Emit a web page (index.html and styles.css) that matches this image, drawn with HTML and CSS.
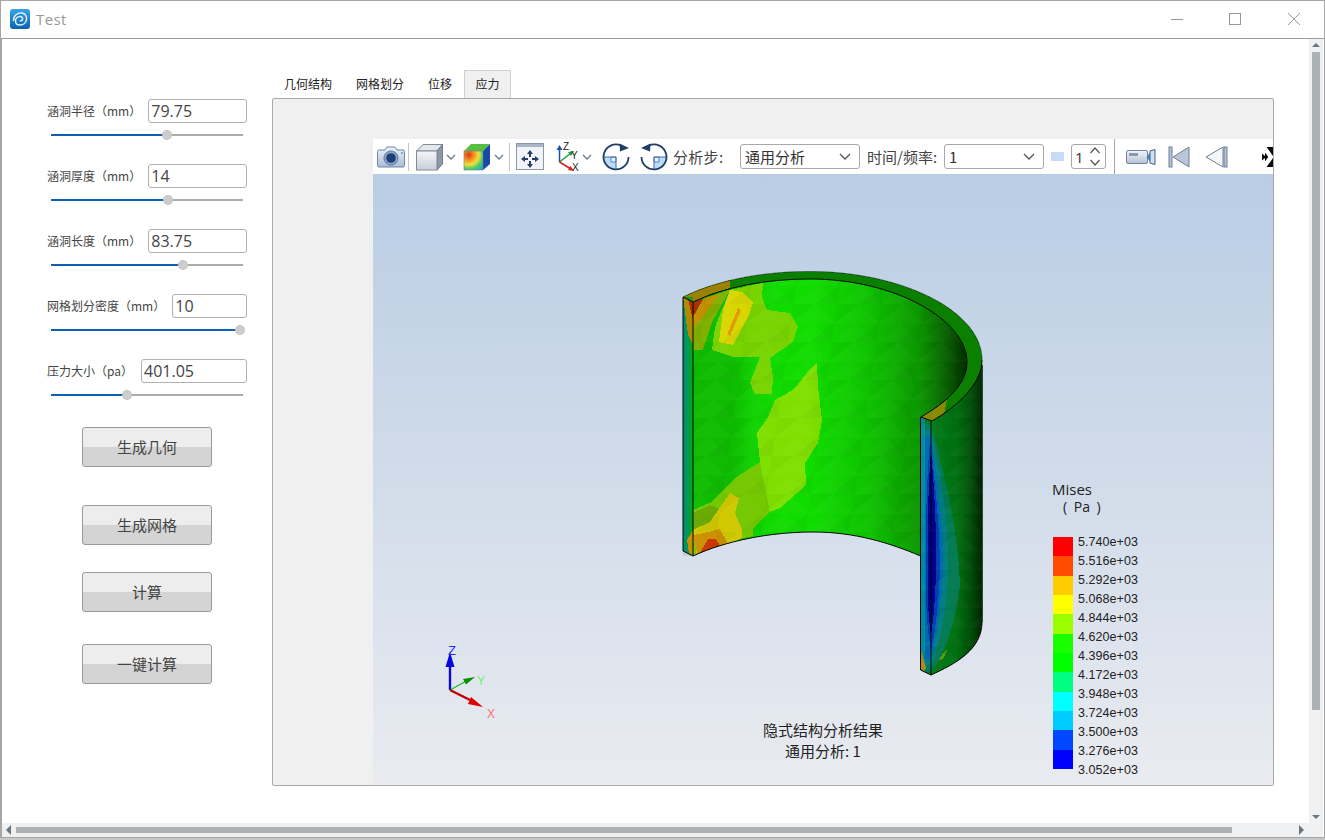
FILE: index.html
```html
<!DOCTYPE html>
<html lang="zh">
<head>
<meta charset="utf-8">
<title>Test</title>
<link rel="stylesheet" href="styles.css">
</head>
<body>
<div class="window">
  <header class="titlebar">
    <svg class="logo" viewBox="0 0 20 20">
      <defs><linearGradient id="lg" x1="0" y1="0" x2="0" y2="1"><stop offset="0" stop-color="#35a5e8"/><stop offset="1" stop-color="#0a62b0"/></linearGradient></defs>
      <rect width="20" height="20" rx="3" fill="url(#lg)"/>
      <path d="M3.500 11.500C3.500 6 8 3.500 12 4c3.500 .5 5 3.500 4.500 6.500-.5 3-3 5.500-6.500 5.500-2.500 0-4.500-1.500-4.500-4 0-2.500 2-4.500 4.500-4.500 2 0 3 1.500 2.500 3-.3 1-1.200 1.500-2.200 1.300" fill="none" stroke="#dff0fb" stroke-width="1.500" stroke-linecap="round"/>
    </svg>
    <span class="title">Test</span>
    <div class="winctl">
      <svg class="wc" viewBox="0 0 12 12"><path d="M0 6.500H12" stroke="#999" fill="none"/></svg>
      <svg class="wc wc-max" viewBox="0 0 12 12"><rect x=".5" y=".5" width="11" height="11" fill="none" stroke="#999"/></svg>
      <svg class="wc" viewBox="0 0 12 12"><path d="M0 0L12 12M12 0L0 12" stroke="#999" fill="none"/></svg>
    </div>
  </header>
  <div class="client">
    <div class="client-main">
      <div class="content">
        <aside class="sidebar">
          <div class="field"><div class="row"><label class="lbl">涵洞半径（mm）</label><input class="num" value="79.75"></div>
            <div class="slider"><div class="fill" style="width:116px"></div><div class="knob" style="left:116px"></div></div></div>
          <div class="field"><div class="row"><label class="lbl">涵洞厚度（mm）</label><input class="num" value="14"></div>
            <div class="slider"><div class="fill" style="width:117px"></div><div class="knob" style="left:117px"></div></div></div>
          <div class="field"><div class="row"><label class="lbl">涵洞长度（mm）</label><input class="num" value="83.75"></div>
            <div class="slider"><div class="fill" style="width:132px"></div><div class="knob" style="left:132px"></div></div></div>
          <div class="field"><div class="row"><label class="lbl">网格划分密度（mm）</label><input class="num" value="10"></div>
            <div class="slider"><div class="fill" style="width:189px"></div><div class="knob" style="left:189px"></div></div></div>
          <div class="field"><div class="row"><label class="lbl lbl-pa">压力大小（pa）</label><input class="num" value="401.05"></div>
            <div class="slider"><div class="fill" style="width:76px"></div><div class="knob" style="left:76px"></div></div></div>
          <button class="btn b1">生成几何</button>
          <button class="btn b2">生成网格</button>
          <button class="btn b3">计算</button>
          <button class="btn b4">一键计算</button>
        </aside>
        <section class="tabs-area">
          <nav class="tabs">
            <span class="tab">几何结构</span><span class="tab">网格划分</span><span class="tab">位移</span><span class="tab active">应力</span>
          </nav>
          <div class="pane">
            <div class="viewer">
              <div class="toolbar">
                <svg class="ic i-cam" viewBox="0 0 30 26">
                  <defs><linearGradient id="cam" x1="0" y1="0" x2="0" y2="1"><stop offset="0" stop-color="#eef3f9"/><stop offset="1" stop-color="#a9bdd6"/></linearGradient></defs>
                  <path d="M3 6h6l2-3h8l2 3h6a1.500 1.500 0 0 1 1.500 1.500v14a1.500 1.500 0 0 1-1.500 1.500H3a1.500 1.500 0 0 1-1.500-1.500v-14A1.500 1.500 0 0 1 3 6z" fill="url(#cam)" stroke="#6f85a3"/>
                  <circle cx="15" cy="14" r="7" fill="#8ea6c4" stroke="#5f7898"/>
                  <circle cx="15" cy="14" r="4.800" fill="#1d3f7c"/>
                  <circle cx="26" cy="9" r="1" fill="#7b90ad"/>
                </svg>
                <i class="tsep s1"></i>
                <svg class="ic i-cube" viewBox="0 0 29 28">
                  <defs><linearGradient id="cb" x1="0" y1="0" x2="0" y2="1"><stop offset="0" stop-color="#f5f6f8"/><stop offset="1" stop-color="#c8ced8"/></linearGradient></defs>
                  <path d="M1.500 8L8 1.500H27.500L22 8z" fill="#e4e7ec" stroke="#808a99"/>
                  <path d="M22 8L27.500 1.500V21L22 27z" fill="#8d98a8" stroke="#707a8a"/>
                  <rect x="1.500" y="8" width="20.500" height="19" fill="url(#cb)" stroke="#808a99"/>
                </svg>
                <svg class="chev c1" viewBox="0 0 10 6"><path d="M1 1l4 4 4-4" fill="none" stroke="#6a7a8a" stroke-width="1.300"/></svg>
                <svg class="ic i-ccube" viewBox="0 0 28 28">
                  <defs><radialGradient id="cc" cx=".25" cy=".2" r="1.050"><stop offset="0" stop-color="#e83020"/><stop offset=".3" stop-color="#f0a020"/><stop offset=".5" stop-color="#f0e040"/><stop offset=".7" stop-color="#50d060"/><stop offset="1" stop-color="#20a0e0"/></radialGradient></defs>
                  <path d="M1 8L8 1H27L20 8z" fill="#58c040"/>
                  <path d="M20 8L27 1V21L20 27z" fill="#1848a8"/>
                  <rect x="1" y="8" width="19" height="19" fill="url(#cc)" stroke="#707a8a" stroke-width=".6"/>
                </svg>
                <svg class="chev c2" viewBox="0 0 10 6"><path d="M1 1l4 4 4-4" fill="none" stroke="#6a7a8a" stroke-width="1.300"/></svg>
                <i class="tsep s2"></i>
                <svg class="ic i-fit" viewBox="0 0 30 30">
                  <rect x="1.500" y="1.500" width="27" height="26" fill="#f2f4f7" stroke="#8a98a8"/>
                  <rect x="2" y="2" width="26" height="3" fill="#a9b6c6"/>
                  <path d="M15 8l-3 4h2v3h2v-3h2zM15 26l-3-4h2v-3h2v3h2zM6 17l4-3v2h3v2h-3v2zM24 17l-4-3v2h-3v2h3v2z" fill="#233f63"/>
                </svg>
                <svg class="ic i-axes" viewBox="0 0 28 30">
                  <path d="M5.500 20V6" stroke="#1c4fb0" stroke-width="1.500"/><path d="M5.500 3l-3 5h6z" fill="#1c4fb0"/>
                  <path d="M5.500 20L17 11" stroke="#1a9a3c" stroke-width="1.500"/><path d="M20 9l-6 1 3 4z" fill="#1a9a3c"/>
                  <path d="M5.500 20L17 27" stroke="#d82020" stroke-width="1.500"/><path d="M20 29l-6-1 2.500-4z" fill="#d82020"/>
                  <text x="9" y="8" class="axl">Z</text><text x="17" y="17" class="axl">Y</text><text x="18" y="29" class="axl">X</text>
                </svg>
                <svg class="chev c3" viewBox="0 0 10 6"><path d="M1 1l4 4 4-4" fill="none" stroke="#6a7a8a" stroke-width="1.300"/></svg>
                <svg class="ic i-rot" viewBox="0 0 30 30">
                  <path d="M15 15V27.500A12.500 12.500 0 0 1 2.500 15z" fill="#bcdcf5"/>
                  <path d="M10 15h5v5h-5z" fill="#e4f2fc" stroke="#3f6fa8" stroke-width=".8"/>
                  <path d="M15 15V28M15 15H2" stroke="#3f6fa8" fill="none"/>
                  <path d="M20 3.500A12.500 12.500 0 1 0 27.500 15" fill="none" stroke="#1f3f66" stroke-width="1.800"/>
                  <path d="M28 6l-9 3.500-.5-8z" fill="#1f3f66"/>
                </svg>
                <svg class="ic i-rot2" viewBox="0 0 30 30">
                  <path d="M15 15V27.500A12.500 12.500 0 0 0 27.500 15z" fill="#bcdcf5"/>
                  <path d="M15 15h5v5h-5z" fill="#e4f2fc" stroke="#3f6fa8" stroke-width=".8"/>
                  <path d="M15 15V28M15 15H28" stroke="#3f6fa8" fill="none"/>
                  <path d="M10 3.500A12.500 12.500 0 1 1 2.500 15" fill="none" stroke="#1f3f66" stroke-width="1.800"/>
                  <path d="M2 6l9 3.500 .5-8z" fill="#1f3f66"/>
                </svg>
                <span class="tlabel l1">分析步:</span>
                <div class="combo c-a"><span>通用分析</span><svg class="cchev" viewBox="0 0 12 7"><path d="M1 1l5 5 5-5" fill="none" stroke="#555" stroke-width="1.300"/></svg></div>
                <span class="tlabel l2">时间/频率:</span>
                <div class="combo c-b"><span>1</span><svg class="cchev" viewBox="0 0 12 7"><path d="M1 1l5 5 5-5" fill="none" stroke="#555" stroke-width="1.300"/></svg></div>
                <i class="pill"></i>
                <div class="spin"><span>1</span><svg class="spinarrows" viewBox="0 0 12 21"><path d="M1.500 7l4.500-5 4.500 5M1.500 14l4.500 5 4.500-5" fill="none" stroke="#555" stroke-width="1.200"/></svg></div>
                <i class="tsep s3"></i>
                <svg class="ic i-rec" viewBox="0 0 30 18">
                  <defs><linearGradient id="rc" x1="0" y1="0" x2="0" y2="1"><stop offset="0" stop-color="#f4f6fa"/><stop offset="1" stop-color="#b4c2d6"/></linearGradient></defs>
                  <rect x=".5" y="2.500" width="21" height="13" rx="1.500" fill="url(#rc)" stroke="#71849c"/>
                  <rect x="3" y="5" width="9" height="3" fill="#8a99ac"/>
                  <path d="M21 9l3-4v8z" fill="#20a0d8" stroke="#3f6288" stroke-width=".6"/>
                  <path d="M24 3l5-1.500v15L24 15z" fill="#d4deec" stroke="#3f6288"/>
                </svg>
                <svg class="ic i-first" viewBox="0 0 22 22">
                  <rect x="1" y="1" width="3" height="20" fill="#b7c4d6" stroke="#6d7e96"/>
                  <path d="M5 11L21 1V21z" fill="#b8c6d8" stroke="#6d7e96"/>
                </svg>
                <svg class="ic i-prev" viewBox="0 0 24 22">
                  <path d="M1 11L18 1V21z" fill="#f4f7fa" stroke="#6d7e96"/>
                  <rect x="19" y="1" width="3" height="20" fill="#b7c4d6" stroke="#6d7e96"/>
                </svg>
                <svg class="ic i-next" viewBox="0 0 14 22">
                  <rect x="3" y="1" width="11" height="20" fill="#0a0a0a"/>
                  <path d="M1 0L9 11 1 22" fill="none" stroke="#fff" stroke-width="4.500"/>
                  <path d="M0 7.500L4 11 0 14.500z" fill="#0a0a0a"/>
                </svg>
              </div>
              <div class="viewport">
                <svg class="scene" viewBox="373 174 900 611" shape-rendering="crispEdges">
                  <defs>
                    <clipPath id="wallclip"><path d="M693 302C725 287 765 279 810 279C895 279 967 320 967 362C967 385 945 403 921 417V556C890 543 855 532 813 532C770 532 725 541 693 556Z"/></clipPath>
                    <clipPath id="frontclip"><path d="M921 417L932 421C955 408 982 385 982 360V622C982 650 955 664 931 675L921 670Z"/></clipPath>
                    <linearGradient id="shadeL" gradientUnits="userSpaceOnUse" x1="693" y1="0" x2="780" y2="0">
                      <stop offset="0" stop-color="#000" stop-opacity=".15"/><stop offset=".44" stop-color="#000" stop-opacity=".15"/><stop offset=".7" stop-color="#000" stop-opacity=".05"/><stop offset="1" stop-color="#000" stop-opacity="0"/>
                    </linearGradient>
                    <linearGradient id="shadeR" gradientUnits="userSpaceOnUse" x1="810" y1="0" x2="967" y2="0">
                      <stop offset="0" stop-color="#000" stop-opacity="0"/><stop offset=".38" stop-color="#000" stop-opacity=".12"/><stop offset=".7" stop-color="#000" stop-opacity=".32"/><stop offset=".9" stop-color="#000" stop-opacity=".62"/><stop offset="1" stop-color="#000" stop-opacity=".8"/>
                    </linearGradient>
                    <linearGradient id="lface" gradientUnits="userSpaceOnUse" x1="683" y1="0" x2="693" y2="0">
                      <stop offset="0" stop-color="#008a80"/><stop offset=".5" stop-color="#009a50"/><stop offset="1" stop-color="#08a808"/>
                    </linearGradient>
                    <linearGradient id="outer" gradientUnits="userSpaceOnUse" x1="931" y1="0" x2="982" y2="0">
                      <stop offset="0" stop-color="#007a18"/><stop offset=".5" stop-color="#007010"/><stop offset=".78" stop-color="#004e08"/><stop offset="1" stop-color="#002400"/>
                    </linearGradient>
                    <pattern id="mesh" patternUnits="userSpaceOnUse" width="44" height="38" patternTransform="skewX(-8)">
                      <polygon points="0,19 22,0 44,19" fill="#fff" fill-opacity=".022"/>
                      <polygon points="22,19 44,38 0,38" fill="#fff" fill-opacity=".022"/>
                      <polygon points="0,0 22,0 0,19" fill="#000" fill-opacity=".022"/>
                      <polygon points="44,19 22,38 44,38" fill="#000" fill-opacity=".035"/>
                    </pattern>
                  </defs>

                  <path d="M693 302C725 287 765 279 810 279C895 279 967 320 967 362C967 385 945 403 921 417V556C890 543 855 532 813 532C770 532 725 541 693 556Z" fill="#10dc00"/>
                  <g clip-path="url(#wallclip)">
                    <rect x="690" y="270" width="100" height="300" fill="url(#shadeL)"/>
                    <polygon points="730,290 763,283 762,297 767,310 790,313 798,327 793,342 770,358 773,377 772,394 755,394 750,383 760,357 733,357 712,350 715,327" fill="#78d400"/>
                    <polygon points="817,363 818,387 822,420 818,443 805,463 806,485 780,508 770,512 753,528 753,536 730,541 697,554 693,556 693,510 712,502 735,478 760,462 757,433 768,417 775,400 793,390 812,367" fill="#7edf00"/>
                    <polygon points="735,478 760,462 770,512 753,528 753,536 730,541 697,554 693,556 693,510 712,502" fill="#74c800"/>
                    <polygon points="693,513 710,505 722,510 715,522 693,532" fill="#68a800"/>
                    <polygon points="730,290 742,292 753,302 750,313 733,345 719,342 723,310" fill="#d8d600"/>
                    <polygon points="738,308 741,310 730,336 727,335" fill="#e09a00"/>
                    <polygon points="693,302 730,290 713,320 703,350 693,350" fill="#80b000"/>
                    <polygon points="693,302 720,293 703,317 693,327" fill="#c09000"/>
                    <polygon points="693,302 703,299 696,312 693,316" fill="#a83000"/>
                    <polygon points="730,493 739,498 735,513 742,530 742,538 727,545 697,556 693,530 710,522" fill="#d0c800"/>
                    <polygon points="720,529 728,544 698,556 693,535 709,532" fill="#cc9000"/>
                    <polygon points="708,539 716,539 720,546 698,556" fill="#c83800"/>
                    <rect x="810" y="270" width="170" height="300" fill="url(#shadeR)"/>
                    <rect x="690" y="270" width="290" height="300" fill="url(#mesh)"/>
                  </g>

                  <path d="M683 297C720 279 765 271.500 810 271.500C900 271.500 982 310 982 360C982 385 955 408 932 421L921 417C945 403 967 385 967 362C967 320 895 279 810 279C765 279 725 287 693 302Z" fill="#0a7f00"/>
                  <polygon points="683,297 700,289 730,280 730,288 710,294 693,302" fill="#9c8000"/>
                  <polygon points="921,417 936,408 947,400 944,414 932,421" fill="#8a8a00"/>

                  <rect x="683" y="297" width="10" height="259" fill="url(#lface)"/>
                  <polygon points="683,551 693,556 683,556" fill="#c8ced9"/>
                  <polygon points="683,297 693,302 693,345 688,335" fill="#b08a00"/>
                  <polygon points="688,299 693,302 693,320" fill="#b03000"/>
                  <polygon points="687,540 693,530 693,556 689,553" fill="#c89000"/>

                  <path d="M921 417L932 421C955 408 982 385 982 360V622C982 650 955 664 931 675L921 670Z" fill="url(#outer)"/>
                  <g clip-path="url(#frontclip)">
                    <path d="M931 424Q958 520 960 585Q952 645 931 672L915 672V424z" fill="#007a50"/>
                    <path d="M931 430Q950 510 948 578Q944 635 931 668L915 668V430z" fill="#007c80"/>
                    <path d="M931 436Q944 520 943 572Q940 625 931 660L917 660V436z" fill="#0068b0"/>
                    <path d="M930 440Q940 520 940 570Q938 620 931 650Q925 620 926 570Q925 500 930 440z" fill="#0040b0"/>
                    <path d="M931 450Q937 520 936 570Q935 610 931 635Q927 610 928 570Q927 500 931 450z" fill="#000090"/>
                    <rect x="921" y="417" width="4" height="260" fill="#008aa0"/>
                    <polygon points="921,650 926,668 923,671 921,668" fill="#b08a10"/>
                    <polygon points="942,655 948,648 943,659 939,660" fill="#5a9a10"/>
                    <rect x="920" y="360" width="62" height="320" fill="url(#mesh)"/>
                  </g>

                  <g fill="none" stroke="#050505" stroke-width="1" shape-rendering="geometricPrecision">
                    <path d="M693 302C725 287 765 279 810 279C895 279 967 320 967 362C967 385 945 403 921 417L932 421C955 408 982 385 982 360"/>
                    <path d="M683 297C720 279 765 271.500 810 271.500C900 271.500 982 310 982 360" stroke-width=".7" stroke="#143a14"/>
                    <path d="M683 297L693 302V556L683 551ZM693 556C725 541 770 532 813 532C855 532 890 543 920.500 556M920.500 417V670L931 675V421M931 675C955 664 982 650 982 622"/>
                  </g>
                  <path d="M982 365V622" fill="none" stroke="#062006" stroke-width=".8"/>

                  <g shape-rendering="geometricPrecision">
                    <path d="M450 690V662" stroke="#0a0ad8" stroke-width="2.400"/>
                    <path d="M450 652l-4.500 15h9z" fill="#0808e0"/>
                    <path d="M450 690L470 679" stroke="#10c030" stroke-width="1.400"/>
                    <path d="M475 677l-12 2 3 5.500z" fill="#0a9000"/>
                    <path d="M450 690L470 700" stroke="#c00000" stroke-width="2.400"/>
                    <path d="M483 707l-12-10-3 7z" fill="#e00000"/>
                    <text x="448" y="655" class="tz">Z</text>
                    <text x="477" y="685" class="ty">Y</text>
                    <text x="487" y="718" class="tx">X</text>
                  </g>
                </svg>

                <div class="legend">
                  <div class="l-title">Mises</div>
                  <div class="l-unit">( Pa )</div>
                  <div class="l-body">
                    <div class="bars">
                      <i class="bar c01"></i><i class="bar c02"></i><i class="bar c03"></i><i class="bar c04"></i><i class="bar c05"></i><i class="bar c06"></i><i class="bar c07"></i><i class="bar c08"></i><i class="bar c09"></i><i class="bar c10"></i><i class="bar c11"></i><i class="bar c12"></i>
                    </div>
                    <div class="vals">
                      <span>5.740e+03</span><span>5.516e+03</span><span>5.292e+03</span><span>5.068e+03</span><span>4.844e+03</span><span>4.620e+03</span><span>4.396e+03</span><span>4.172e+03</span><span>3.948e+03</span><span>3.724e+03</span><span>3.500e+03</span><span>3.276e+03</span><span>3.052e+03</span>
                    </div>
                  </div>
                </div>
                <div class="caption"><div>隐式结构分析结果</div><div>通用分析: 1</div></div>
              </div>
            </div>
          </div>
        </section>
      </div>
      <div class="hscroll">
        <svg class="sarrow" viewBox="0 0 5 10"><path d="M5 0V10L0 5z" fill="#6a7680"/></svg>
        <div class="hthumb"></div>
        <svg class="sarrow-r" viewBox="0 0 5 10"><path d="M0 0V10L5 5z" fill="#6a7680"/></svg>
      </div>
    </div>
    <div class="vscroll">
      <svg class="varrow" viewBox="0 0 10 5"><path d="M0 5H10L5 0z" fill="#6a7680"/></svg>
      <div class="vthumb"></div>
      <svg class="varrow" viewBox="0 0 10 5"><path d="M0 0H10L5 5z" fill="#6a7680"/></svg>
    </div>
  </div>
</div>
</body>
</html>
```

FILE: styles.css
```css
* { box-sizing: border-box; }
html, body { margin: 0; padding: 0; height: 100%; overflow: hidden; background: #c8c8c8; }
body { font-family: "Noto Sans CJK SC", "Liberation Sans", sans-serif; color: #333; }

.window { width: 1325px; height: 838px; background: #fff; border: 1px solid #a6a6a6; display: flex; flex-direction: column; }

.titlebar { height: 38px; flex: none; display: flex; align-items: center; padding: 0 0 2px 9px; border-bottom: 1px solid #9c9c9c; }
.logo { width: 20px; height: 20px; flex: none; }
.title { margin-left: 6px; font: 15px "Open Sans", "Liberation Sans", sans-serif; color: #999; letter-spacing: .4px; }
.winctl { margin-left: auto; display: flex; align-items: center; padding-right: 24px; gap: 46px; }
.wc { width: 12px; height: 12px; display: block; }
.wc-max { margin-right: 1px; }

.client { flex: 1; min-height: 0; display: flex; border-left: 1px solid #a6a6a6; }
.client-main { flex: 1; min-width: 0; display: flex; flex-direction: column; }
.content { flex: 1; min-height: 0; display: flex; }

.sidebar { width: 270px; flex: none; padding: 60px 25px 0 44px; display: flex; flex-direction: column; align-items: stretch; }
.field { margin-bottom: 24px; }
.row { display: flex; align-items: center; height: 24px; }
.lbl { flex: none; font-size: 12px; line-height: 24px; margin: 0 7px 0 1px; color: #444; white-space: nowrap; }
.lbl-pa { margin-right: 8px; }
.num { flex: 1; min-width: 0; height: 24px; padding: 0 2px; border: 1px solid #b0b0b0; border-radius: 3px; font: 16px "Open Sans", "Liberation Sans", sans-serif; color: #444; outline: none; background: #fff; }

.slider { position: relative; height: 2px; margin: 11px 4px 4px 5px; background: #acacac; }
.fill { height: 100%; background: #0a62b5; }
.knob { position: absolute; top: -4px; width: 10px; height: 10px; margin-left: -5px; border-radius: 50%; background: #cdcdcd; border: 1px dotted #bbb; }

.btn { display: block; width: 130px; height: 40px; margin-left: 36px; flex: none; padding: 0 0 2px; border: 1px solid #9a9a9a; border-radius: 3px; background: linear-gradient(#ededed 0, #ededed 50%, #d4d4d4 50%, #d4d4d4 100%); font: 15px "Noto Sans CJK SC", sans-serif; color: #444; }
.b1 { margin-top: 3px; }
.b2 { margin-top: 38px; }
.b3 { margin-top: 27px; }
.b4 { margin-top: 32px; }

.tabs-area { flex: none; width: 1002px; padding-top: 31px; display: flex; flex-direction: column; height: 747px; }
.tabs { height: 28px; flex: none; display: flex; padding-left: 0; }
.tab { padding: 0 12px; font-size: 12px; line-height: 27px; color: #222; }
.active { background: #f0f0f0; border: 1px solid #d0d0d0; border-bottom: 0; padding: 0 10.500px; line-height: 26px; }
.pane { flex: 1; min-height: 0; background: #f0f0f0; border: 1px solid #a8a8a8; border-radius: 2px; padding: 40px 0 0 100px; }
.viewer { height: 100%; display: flex; flex-direction: column; overflow: hidden; }

.toolbar { height: 35px; flex: none; background: #fff; display: flex; align-items: center; overflow: hidden; }
.ic { flex: none; display: block; }
.i-cam { width: 30px; height: 26px; margin-left: 3px; }
.tsep { flex: none; display: block; width: 1px; background: #c6c6c6; height: 28px; }
.s1 { margin-left: 2px; }
.i-cube { width: 29px; height: 28px; margin-left: 6px; }
.chev { flex: none; width: 10px; height: 6px; display: block; }
.c1 { margin-left: 2px; }
.i-ccube { width: 28px; height: 28px; margin-left: 7px; }
.c2 { margin-left: 3px; }
.s2 { margin-left: 5px; }
.i-fit { width: 30px; height: 30px; margin-left: 5px; }
.i-axes { width: 28px; height: 30px; margin-left: 9px; }
.axl { font: 10px "Liberation Sans", sans-serif; fill: #222; }
.c3 { margin-left: 0; }
.i-rot { width: 30px; height: 30px; margin-left: 9px; }
.i-rot2 { width: 30px; height: 30px; margin-left: 8px; }
.tlabel { flex: none; font-size: 15px; color: #444; white-space: nowrap; line-height: 20px; }
.l1 { margin-left: 4px; width: 67px; letter-spacing: .3px; }
.l2 { margin-left: 7px; width: 77px; }
.combo { flex: none; height: 25px; display: flex; align-items: center; justify-content: space-between; padding: 0 8px 0 4px; border: 1px solid #a8a8a8; border-radius: 3px; background: #fff; font-size: 15px; color: #333; }
.c-a { width: 120px; }
.c-b { width: 100px; }
.cchev { width: 12px; height: 7px; display: block; flex: none; }
.pill { flex: none; display: block; width: 13px; height: 9px; margin-left: 7px; background: #c6dcf6; border-radius: 1px; }
.spin { flex: none; width: 35px; height: 25px; margin-left: 7px; display: flex; align-items: center; justify-content: space-between; padding: 0 4px 0 3px; border: 1px solid #a8a8a8; border-radius: 3px; font: 15px "Open Sans", sans-serif; color: #333; }
.spinarrows { width: 12px; height: 21px; display: block; }
.s3 { margin-left: 8px; height: 35px; background: #a8a8a8; }
.i-rec { width: 30px; height: 18px; margin-left: 11px; }
.i-first { width: 22px; height: 22px; margin-left: 12px; }
.i-prev { width: 24px; height: 22px; margin-left: 15px; }
.i-next { width: 14px; height: 22px; margin-left: 33px; }

.viewport { flex: 1; min-height: 0; position: relative; overflow: hidden; background: linear-gradient(#b9cde4, #e9ebf0); }
.scene { position: absolute; inset: 0; width: 900px; height: 611px; display: block; }
.tz { font: 13px "Liberation Sans", sans-serif; fill: #2a2aff; }
.ty { font: 12px "Liberation Sans", sans-serif; fill: #70f070; }
.tx { font: 12px "Liberation Sans", sans-serif; fill: #ff7070; }

.legend { position: absolute; left: 679px; top: 306px; color: #111; }
.l-title { font: 15px/18px "Open Sans", "Liberation Sans", sans-serif; color: #222; }
.l-unit { font: 14px/18px "Open Sans", sans-serif; color: #222; margin-left: 11px; word-spacing: 3px; }
.l-body { display: flex; margin-top: 21px; margin-left: 1px; }
.bars { width: 20px; display: flex; flex-direction: column; flex: none; }
.bar { display: block; height: 19.330px; flex: none; }
.c01 { background: #ff0000; } .c02 { background: #ff4c00; } .c03 { background: #ffcc00; } .c04 { background: #ffff00; }
.c05 { background: #99ff00; } .c06 { background: #19ff00; } .c07 { background: #00ff00; } .c08 { background: #00ff80; }
.c09 { background: #00ffff; } .c10 { background: #00ccff; } .c11 { background: #0048ff; } .c12 { background: #0000ff; }
.vals { margin-left: 5px; display: flex; flex-direction: column; font: 12.500px/19px "Liberation Sans", sans-serif; color: #222; margin-top: -4px; letter-spacing: .05px; }
.caption { position: absolute; left: 350px; width: 200px; top: 545px; text-align: center; font-size: 15px; line-height: 21px; color: #222; }

.hscroll { height: 14px; flex: none; background: #eef0f2; display: flex; align-items: center; padding: 0 4px; }
.sarrow { width: 5px; height: 10px; flex: none; }
.hthumb { width: 1216px; height: 6px; background: #adb1b4; margin-left: 5px; flex: none; }
.sarrow-r { width: 5px; height: 10px; flex: none; margin-left: auto; margin-right: 1px; }
.vscroll { width: 14px; flex: none; background: #f0f1f3; display: flex; flex-direction: column; align-items: center; padding: 4px 0 18px; margin-right: 1px; }
.varrow { width: 8px; height: 4px; flex: none; }
.vthumb { width: 8px; height: 658px; background: #adb1b4; margin-top: 5px; margin-bottom: auto; flex: none; }
```
